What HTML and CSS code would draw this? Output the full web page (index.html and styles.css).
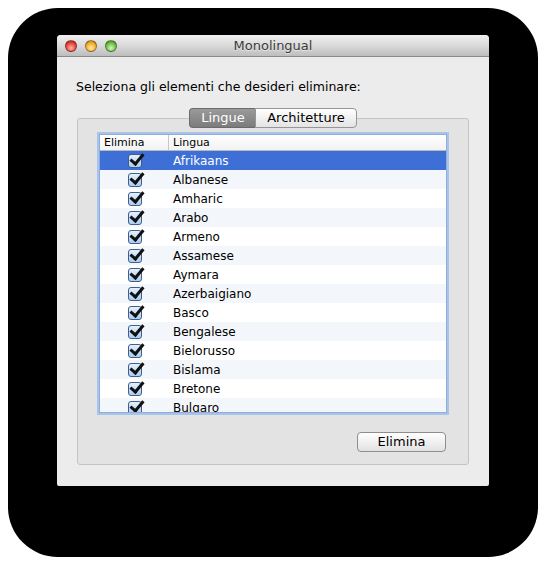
FILE: index.html
```html
<!DOCTYPE html>
<html>
<head>
<meta charset="utf-8">
<link rel="stylesheet" href="styles.css">
</head>
<body>
<div class="shadow">
  <div class="window">
    <div class="titlebar">
      <div class="lights">
        <span class="light red"></span>
        <span class="light yellow"></span>
        <span class="light green"></span>
      </div>
      <div class="title">Monolingual</div>
    </div>
    <div class="content">
      <p class="prompt">Seleziona gli elementi che desideri eliminare:</p>
      <div class="tabview">
        <div class="tabs">
          <span class="tab active">Lingue</span>
          <span class="tab">Architetture</span>
        </div>
        <div class="tabbox">
          <div class="table">
            <div class="thead">
              <div class="col-check">Elimina</div>
              <div class="col-name">Lingua</div>
            </div>
            <div class="tbody">
              <div class="row selected"><div class="col-check"><span class="cb"></span></div><div class="col-name">Afrikaans</div></div>
              <div class="row alt"><div class="col-check"><span class="cb"></span></div><div class="col-name">Albanese</div></div>
              <div class="row"><div class="col-check"><span class="cb"></span></div><div class="col-name">Amharic</div></div>
              <div class="row alt"><div class="col-check"><span class="cb"></span></div><div class="col-name">Arabo</div></div>
              <div class="row"><div class="col-check"><span class="cb"></span></div><div class="col-name">Armeno</div></div>
              <div class="row alt"><div class="col-check"><span class="cb"></span></div><div class="col-name">Assamese</div></div>
              <div class="row"><div class="col-check"><span class="cb"></span></div><div class="col-name">Aymara</div></div>
              <div class="row alt"><div class="col-check"><span class="cb"></span></div><div class="col-name">Azerbaigiano</div></div>
              <div class="row"><div class="col-check"><span class="cb"></span></div><div class="col-name">Basco</div></div>
              <div class="row alt"><div class="col-check"><span class="cb"></span></div><div class="col-name">Bengalese</div></div>
              <div class="row"><div class="col-check"><span class="cb"></span></div><div class="col-name">Bielorusso</div></div>
              <div class="row alt"><div class="col-check"><span class="cb"></span></div><div class="col-name">Bislama</div></div>
              <div class="row"><div class="col-check"><span class="cb"></span></div><div class="col-name">Bretone</div></div>
              <div class="row alt"><div class="col-check"><span class="cb"></span></div><div class="col-name">Bulgaro</div></div>
            </div>
          </div>
          <div class="actions">
            <button class="btn">Elimina</button>
          </div>
        </div>
      </div>
    </div>
  </div>
</div>
</body>
</html>
```

FILE: styles.css
```css
* { box-sizing: border-box; }
html, body { margin: 0; padding: 0; background: #fff; }
body { font-family: "DejaVu Sans", "Liberation Sans", sans-serif; }

.shadow {
  margin: 8px;
  width: 530px;
  height: 549px;
  background: #000;
  border-radius: 50px;
  padding: 27px 0 0 49px;
}

.window {
  width: 432px;
  height: 451px;
  background: #ececec;
  border-radius: 4px 4px 2px 2px;
  overflow: hidden;
  display: flex;
  flex-direction: column;
}

.titlebar {
  height: 22px;
  flex: none;
  background: linear-gradient(#f0f0f0, #dadada 50%, #bdbdbd);
  border-bottom: 1px solid #8a8a8a;
  display: flex;
  align-items: center;
  position: relative;
}
.lights { display: flex; gap: 8px; padding-left: 8px; }
.light {
  width: 12px; height: 12px; border-radius: 50%;
  border: 1px solid rgba(0,0,0,0.35);
}
.red { background: radial-gradient(circle at 50% 70%, #ffb3aa, #e8483e 55%, #a5180f); }
.yellow { background: radial-gradient(circle at 50% 70%, #ffe9a6, #f3b132 55%, #a8700c); }
.green { background: radial-gradient(circle at 50% 70%, #d6f7b8, #72c14a 55%, #3b7e1c); }
.title {
  position: absolute; left: 0; right: 0; top: 0; bottom: 0;
  display: flex; align-items: center; justify-content: center;
  font-size: 13px; color: #3a3a3a;
  text-shadow: 0 1px 0 rgba(255,255,255,0.5);
}

.content {
  flex: 1;
  padding: 0 20px 0 20px;
  display: flex;
  flex-direction: column;
}
.prompt {
  margin: 22px 0 0 -1px;
  font-size: 12.5px;
  line-height: 16px;
  color: #000;
}

.tabview { margin-top: 13px; display: flex; flex-direction: column; }
.tabs {
  display: flex;
  justify-content: center;
  margin-bottom: -10px;
  position: relative;
  z-index: 1;
}
.tab {
  height: 20px;
  line-height: 18px;
  font-size: 13px;
  padding: 0 11px;
  border: 1px solid #969696;
  background: linear-gradient(#ffffff, #f1f1f1 50%, #e4e4e4);
  color: #000;
}
.tab:first-child { border-radius: 4px 0 0 4px; border-right: none; }
.tab:last-child { border-radius: 0 4px 4px 0; }
.tab.active {
  background: linear-gradient(#9a9a9a, #7c7c7c);
  color: #fff;
  border-color: #6b6b6b;
  width: 66px;
  text-align: center;
}

.tabbox {
  height: 347px;
  background: #e3e3e3;
  border: 1px solid #c4c4c4;
  border-radius: 3px;
  padding: 15px 21px 0 21px;
  display: flex;
  flex-direction: column;
}

.table {
  height: 279px;
  background: #fff;
  border: 1px solid #8eaed9;
  box-shadow: 0 0 0 2px #a9c4ea;
  overflow: hidden;
  display: flex;
  flex-direction: column;
}
.thead {
  height: 16px;
  flex: none;
  display: flex;
  font-size: 11px;
  line-height: 15px;
  background: linear-gradient(#ffffff, #f2f2f2);
  border-bottom: 1px solid #b9b9b9;
  color: #000;
}
.thead .col-check { border-right: 1px solid #c8c8c8; padding-left: 4px; width: 69px; }
.thead .col-name { padding-left: 4px; }

.row {
  height: 19px;
  display: flex;
  align-items: center;
  font-size: 12px;
  color: #000;
}
.row.alt { background: #f3f6fa; }
.row.selected { background: #3d6fd7; color: #fff; }
.row .col-check { width: 69px; display: flex; justify-content: center; }
.row .col-name { padding-left: 4px; }

.cb {
  width: 14px; height: 14px;
  border: 1px solid #3f5e8f;
  border-radius: 3px;
  background: linear-gradient(#e5f1fd, #a9cdf2);
  position: relative;
  margin-top: 1px;
}
.cb::after {
  content: "";
  position: absolute;
  left: 4px; top: -4px;
  width: 5px; height: 11px;
  border-right: 3px solid #111;
  border-bottom: 3px solid #111;
  transform: rotate(40deg);
}

.actions {
  display: flex;
  justify-content: flex-end;
  margin-top: 19px;
}
.btn {
  width: 89px;
  height: 20px;
  margin-right: 1px;
  font-family: inherit;
  font-size: 13px;
  line-height: 16px;
  border: 1px solid #8e8e8e;
  border-radius: 4px;
  background: linear-gradient(#ffffff, #f0f0f0 50%, #e2e2e2);
  color: #000;
  padding: 0;
}
```
